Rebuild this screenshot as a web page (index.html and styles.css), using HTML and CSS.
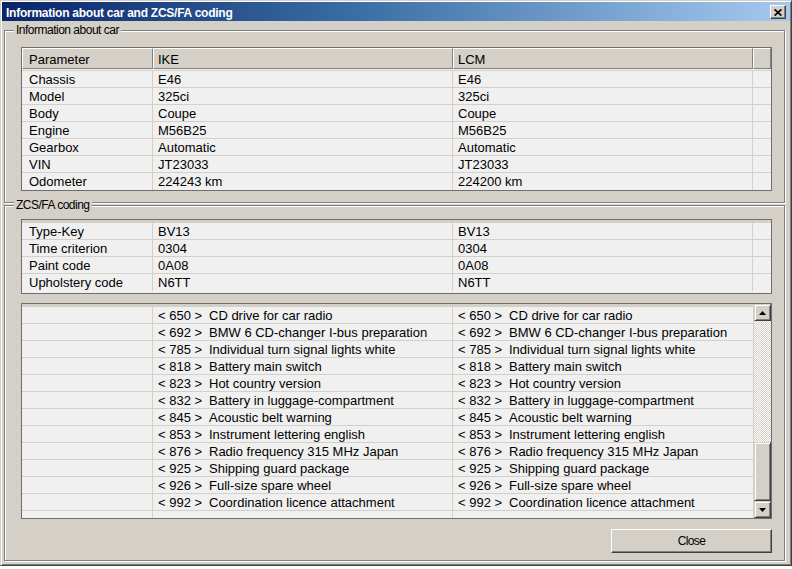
FILE: index.html
```html
<!DOCTYPE html>
<html>
<head>
<meta charset="utf-8">
<title>Information about car and ZCS/FA coding</title>
<link rel="stylesheet" href="styles.css">
</head>
<body>
<div class="window">
  <div class="titlebar">
    <span class="title">Information about car and ZCS/FA coding</span>
    <span class="tclose"><svg width="8" height="7" viewBox="0 0 8 7"><path d="M0.6 0.4 L7.4 6.6 M7.4 0.4 L0.6 6.6" stroke="#000" stroke-width="1.7"/></svg></span>
  </div>
  <div class="body">
    <div class="group g1">
      <div class="caption">Information about car</div>
      <div class="table t1">
        <div class="hrow">
          <div class="hc">Parameter</div><div class="hc">IKE</div><div class="hc">LCM</div><div class="hc"></div>
        </div>
        <div class="gap"></div>
        <div class="row"><div class="c">Chassis</div><div class="c">E46</div><div class="c">E46</div><div class="c"></div></div>
        <div class="row"><div class="c">Model</div><div class="c">325ci</div><div class="c">325ci</div><div class="c"></div></div>
        <div class="row"><div class="c">Body</div><div class="c">Coupe</div><div class="c">Coupe</div><div class="c"></div></div>
        <div class="row"><div class="c">Engine</div><div class="c">M56B25</div><div class="c">M56B25</div><div class="c"></div></div>
        <div class="row"><div class="c">Gearbox</div><div class="c">Automatic</div><div class="c">Automatic</div><div class="c"></div></div>
        <div class="row"><div class="c">VIN</div><div class="c">JT23033</div><div class="c">JT23033</div><div class="c"></div></div>
        <div class="row"><div class="c">Odometer</div><div class="c">224243 km</div><div class="c">224200 km</div><div class="c"></div></div>
      </div>
    </div>
    <div class="group g2">
      <div class="caption">ZCS/FA coding</div>
      <div class="table t2">
        <div class="strip"></div>
        <div class="row"><div class="c">Type-Key</div><div class="c">BV13</div><div class="c">BV13</div><div class="c"></div></div>
        <div class="row"><div class="c">Time criterion</div><div class="c">0304</div><div class="c">0304</div><div class="c"></div></div>
        <div class="row"><div class="c">Paint code</div><div class="c">0A08</div><div class="c">0A08</div><div class="c"></div></div>
        <div class="row"><div class="c">Upholstery code</div><div class="c">N6TT</div><div class="c">N6TT</div><div class="c"></div></div>
      </div>
      <div class="table t3">
        <div class="list">
          <div class="strip"></div>
          <div class="row"><div class="c"></div><div class="c"><span class="code">&lt; 650 &gt;</span>CD drive for car radio</div><div class="c"><span class="code">&lt; 650 &gt;</span>CD drive for car radio</div></div>
          <div class="row"><div class="c"></div><div class="c"><span class="code">&lt; 692 &gt;</span>BMW 6 CD-changer I-bus preparation</div><div class="c"><span class="code">&lt; 692 &gt;</span>BMW 6 CD-changer I-bus preparation</div></div>
          <div class="row"><div class="c"></div><div class="c"><span class="code">&lt; 785 &gt;</span>Individual turn signal lights white</div><div class="c"><span class="code">&lt; 785 &gt;</span>Individual turn signal lights white</div></div>
          <div class="row"><div class="c"></div><div class="c"><span class="code">&lt; 818 &gt;</span>Battery main switch</div><div class="c"><span class="code">&lt; 818 &gt;</span>Battery main switch</div></div>
          <div class="row"><div class="c"></div><div class="c"><span class="code">&lt; 823 &gt;</span>Hot country version</div><div class="c"><span class="code">&lt; 823 &gt;</span>Hot country version</div></div>
          <div class="row"><div class="c"></div><div class="c"><span class="code">&lt; 832 &gt;</span>Battery in luggage-compartment</div><div class="c"><span class="code">&lt; 832 &gt;</span>Battery in luggage-compartment</div></div>
          <div class="row"><div class="c"></div><div class="c"><span class="code">&lt; 845 &gt;</span>Acoustic belt warning</div><div class="c"><span class="code">&lt; 845 &gt;</span>Acoustic belt warning</div></div>
          <div class="row"><div class="c"></div><div class="c"><span class="code">&lt; 853 &gt;</span>Instrument lettering english</div><div class="c"><span class="code">&lt; 853 &gt;</span>Instrument lettering english</div></div>
          <div class="row"><div class="c"></div><div class="c"><span class="code">&lt; 876 &gt;</span>Radio frequency 315 MHz Japan</div><div class="c"><span class="code">&lt; 876 &gt;</span>Radio frequency 315 MHz Japan</div></div>
          <div class="row"><div class="c"></div><div class="c"><span class="code">&lt; 925 &gt;</span>Shipping guard package</div><div class="c"><span class="code">&lt; 925 &gt;</span>Shipping guard package</div></div>
          <div class="row"><div class="c"></div><div class="c"><span class="code">&lt; 926 &gt;</span>Full-size spare wheel</div><div class="c"><span class="code">&lt; 926 &gt;</span>Full-size spare wheel</div></div>
          <div class="row"><div class="c"></div><div class="c"><span class="code">&lt; 992 &gt;</span>Coordination licence attachment</div><div class="c"><span class="code">&lt; 992 &gt;</span>Coordination licence attachment</div></div>
          <div class="row"><div class="c"></div><div class="c"></div><div class="c"></div></div>
        </div>
        <div class="sb">
          <div class="sbbtn"><svg width="7" height="4" viewBox="0 0 7 4"><polygon points="0,4 7,4 3.5,0" fill="#000"/></svg></div>
          <div class="track"></div>
          <div class="thumb"></div>
          <div class="sbbtn"><svg width="7" height="4" viewBox="0 0 7 4"><polygon points="0,0 7,0 3.5,4" fill="#000"/></svg></div>
        </div>
      </div>
      <div class="btn">Close</div>
    </div>
  </div>
</div>
</body>
</html>
```

FILE: styles.css
```css
* { box-sizing: border-box; }
html, body { margin: 0; padding: 0; }
body {
  width: 792px;
  height: 569px;
  overflow: hidden;
  background: #ffffff;
  font-family: "Liberation Sans", Arial, sans-serif;
  color: #000;
}
.window {
  width: 792px;
  height: 566px;
  background: #d4d0c8;
  border: 1px solid;
  border-color: #d4d0c8 #404040 #404040 #d4d0c8;
  box-shadow: inset 1px 1px 0 #ffffff, inset -1px -1px 0 #808080;
  padding: 1px;
  display: flex;
  flex-direction: column;
}
.titlebar {
  flex: none;
  height: 19px;
  background: linear-gradient(to right, #0a246a 0%, #3a6ea5 45%, #a6caf0 100%);
  display: flex;
  align-items: flex-start;
  justify-content: space-between;
  padding: 0 4px 0 4px;
}
.title {
  color: #fff;
  font-weight: bold;
  font-size: 12px;
  letter-spacing: -0.25px;
  line-height: 14px;
  margin-top: 4px;
  white-space: nowrap;
}
.tclose {
  margin-top: 3px;
  width: 16px;
  height: 14px;
  background: #d4d0c8;
  border: 1px solid;
  border-color: #ffffff #404040 #404040 #ffffff;
  box-shadow: inset -1px -1px 0 #808080;
  display: flex;
  align-items: center;
  justify-content: center;
}
.tclose svg { display: block; }
.body {
  flex: 1;
  display: flex;
  flex-direction: column;
  padding: 9px 5px 3px 2px;
}
.group {
  border: 1px solid #808080;
  box-shadow: inset 1px 1px 0 #ffffff, 1px 1px 0 #ffffff;
  display: flex;
  flex-direction: column;
}
.g1 { flex: none; }
.g2 { flex: 1; margin-top: 2px; }
.caption {
  width: max-content;
  margin: -8px 0 0 9px;
  padding: 0 2px;
  background: #d4d0c8;
  font-size: 12px;
  letter-spacing: -0.5px;
  line-height: 14px;
  white-space: nowrap;
}
.table {
  border: 1px solid #6e6e6e;
  background: #f0f0f0;
  margin-left: 16px;
  margin-right: 12px;
  font-size: 13px;
}
.t1 { margin-top: 10px; margin-bottom: 11px; padding-bottom: 1px; }
.t2 { margin-top: 7px; padding-bottom: 3px; }
.t3 {
  margin-top: 9px;
  height: 216px;
  display: flex;
}
.hrow {
  display: grid;
  grid-template-columns: 131px 300px 300px 1fr;
  height: 20px;
}
.hc {
  background: #d4d0c8;
  border-top: 1px solid #ffffff;
  border-left: 1px solid #ffffff;
  border-right: 1px solid #808080;
  border-bottom: 1px solid #808080;
  padding: 2px 0 0 4px;
  line-height: 17px;
  white-space: nowrap;
  overflow-x: clip;
}
.hc:first-child { padding-left: 6px; }
.gap { height: 2px; }
.strip { height: 2px; background: #d4d0c8; }
.row {
  display: grid;
  grid-template-columns: 131px 300px 300px 1fr;
  height: 17px;
  border-top: 1px solid #d4d0c8;
}
.c {
  border-right: 1px solid #d4d0c8;
  padding: 1px 0 0 5px;
  line-height: 16px;
  white-space: nowrap;
  overflow-x: clip;
}
.c:first-child { padding-left: 7px; }
.c:last-child { border-right: 0; }
.list {
  flex: 1;
  overflow: hidden;
}
.list .row { grid-template-columns: 131px 300px 301px; }
.list .c:last-child { border-right: 1px solid #d4d0c8; }
.code {
  display: inline-block;
  width: 51px;
}
.sb {
  flex: none;
  width: 17px;
  display: flex;
  flex-direction: column;
}
.sbbtn, .thumb {
  background: #d4d0c8;
  border: 1px solid;
  border-color: #d4d0c8 #404040 #404040 #d4d0c8;
  box-shadow: inset 1px 1px 0 #ffffff, inset -1px -1px 0 #808080;
}
.sbbtn {
  flex: none;
  height: 17px;
  display: flex;
  align-items: center;
  justify-content: center;
}
.sbbtn svg { display: block; }
.track {
  flex: none;
  height: 121px;
  background: repeating-conic-gradient(#ffffff 0 25%, #d4d0c8 0 50%) 0 0 / 2px 2px;
}
.thumb { flex: 1; }
.btn {
  align-self: flex-end;
  margin: 10px 12px 0 0;
  width: 161px;
  height: 24px;
  background: #d4d0c8;
  border: 1px solid;
  border-color: #ffffff #404040 #404040 #ffffff;
  box-shadow: inset -1px -1px 0 #808080;
  font-size: 12px;
  letter-spacing: -0.6px;
  line-height: 22px;
  text-align: center;
}
```
